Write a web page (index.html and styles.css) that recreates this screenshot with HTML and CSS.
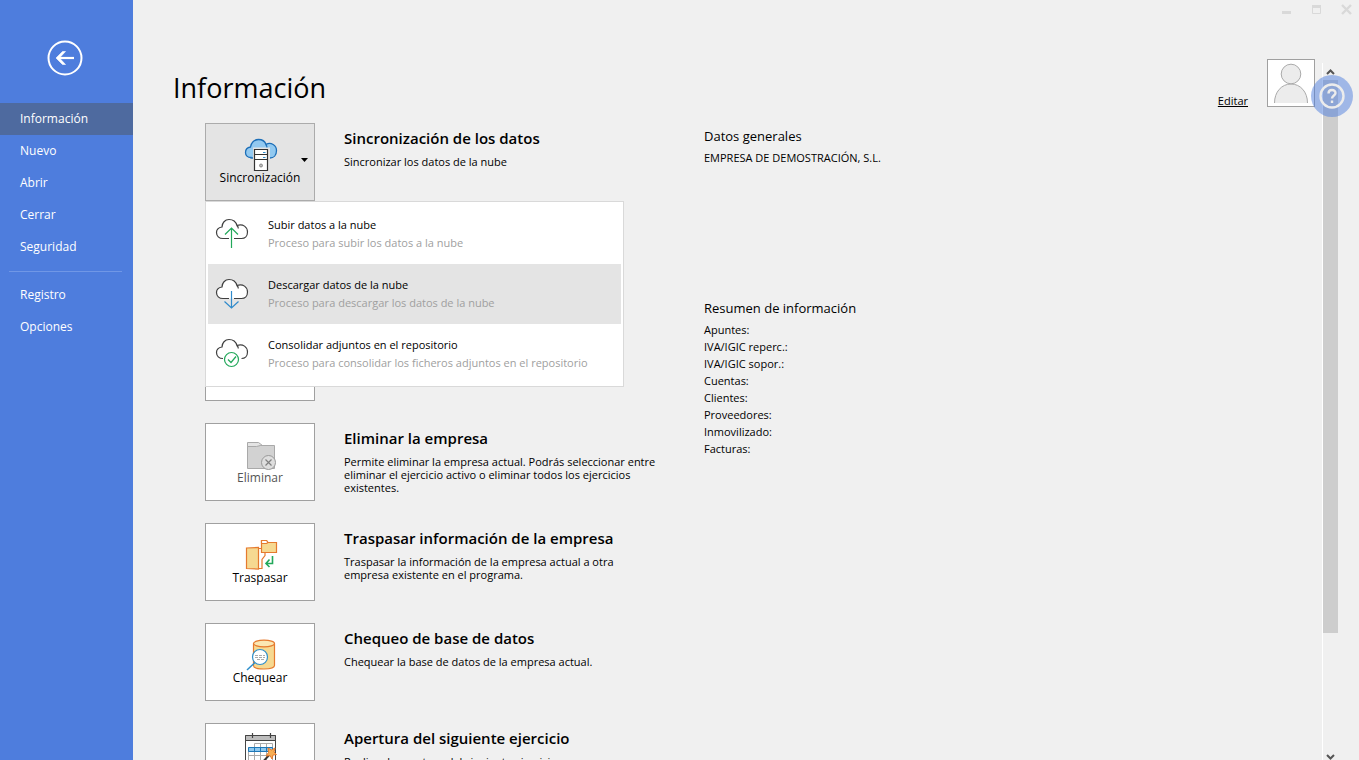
FILE: index.html
```html
<!DOCTYPE html>
<html lang="es">
<head>
<meta charset="utf-8">
<meta name="viewport" content="width=device-width, initial-scale=1">
<title>Información</title>
<link rel="stylesheet" href="styles.css">
</head>
<body>
<div class="app">
  <nav class="sidebar">
    <button class="back" type="button" aria-label="Volver">
      <svg width="36" height="36" viewBox="0 0 36 36" fill="none" stroke="#fff"><circle cx="18" cy="18" r="16.500" stroke-width="2"/><path d="M27 18H11" stroke-width="2.200"/><path d="M18.500 11.500H15.500L9 18L15.500 24.500H18.500L12.500 18Z" fill="#fff" stroke-width=".6"/></svg>
    </button>
    <a class="nav-item active" href="#">Información</a>
    <a class="nav-item" href="#">Nuevo</a>
    <a class="nav-item" href="#">Abrir</a>
    <a class="nav-item" href="#">Cerrar</a>
    <a class="nav-item" href="#">Seguridad</a>
    <hr class="nav-line">
    <a class="nav-item" href="#">Registro</a>
    <a class="nav-item" href="#">Opciones</a>
  </nav>

  <main class="main">
    <div class="window-bar">
      <button type="button" aria-label="Minimizar"><svg width="11" height="11" viewBox="0 0 11 11"><path d="M1 7h9v3H1z" fill="#d9d9d9"/></svg></button>
      <button type="button" aria-label="Maximizar"><svg width="11" height="11" viewBox="0 0 11 11"><path d="M1.500 1.500h8v8h-8z" fill="none" stroke="#d9d9d9"/><path d="M1 1h9v3H1z" fill="#d9d9d9"/></svg></button>
      <button type="button" aria-label="Cerrar ventana"><svg width="11" height="11" viewBox="0 0 11 11"><path d="M1 1l9 9M10 1l-9 9" stroke="#d9d9d9" stroke-width="2.400"/></svg></button>
    </div>

    <div class="body">
      <div class="content">
        <header class="header">
          <h1>Información</h1>
          <div class="profile">
            <a class="edit" href="#">Editar</a>
            <svg class="avatar" viewBox="0 0 46 46" fill="#ececec" stroke="#aaa"><path d="M6.500 43c0-11 7-19 16.500-19s16.500 8 16.500 19"/><circle cx="23" cy="14" r="9.800"/></svg>
          </div>
        </header>

        <div class="columns">
          <section class="actions">
            <div class="action">
              <div class="dropdown">
                <button class="tile open" type="button" aria-haspopup="menu">
                  <svg class="icon" width="34" height="34" viewBox="0 0 34 34"><path d="M7 19.500C3.500 19.500 1.500 17.500 1.500 14.500S3.500 9.500 6.500 9C7 5 10 1.500 14.500 1.500c4 0 6.500 2 7.500 5 5-3 10.500 1 10.500 6s-3 7.500-6.500 7.500H7Z" fill="#92c9f0" stroke="#1d6fb8" stroke-width="1.300"/><path d="M22 6.500c1 1.500 1.200 2.500 1 4" fill="none" stroke="#1d6fb8" stroke-width="1.300"/><path d="M9 9.500h17v24H9z" fill="#e4e4e4"/><path d="M10.500 11.500h13v21h-13zM10.500 16.500h13M10.500 21.500h13" fill="#fff" stroke="#333" stroke-width="1.200"/><path d="M19 14.500h2.500M19 19.500h2.500" stroke="#2f8fd0"/><circle cx="17" cy="27.500" r="1.500" fill="#bbb" stroke="#888"/></svg>
                  <span>Sincronización</span>
                  <svg class="caret" width="7" height="4" viewBox="0 0 7 4"><path d="M0 0h7L3.500 4z"/></svg>
                </button>
                <div class="menu" role="menu">
                  <button class="menu-item" type="button" role="menuitem">
                    <svg width="34" height="34" viewBox="0 0 34 34" fill="none" stroke="#404040" stroke-width="1.200"><path d="M14 22.500H8C4 22.500 1.500 20 1.500 16.500S4 11.500 7 11C7 7 10 3.500 14 3.500c4.500 0 7 2.500 8 6 6-2 10.500 1.500 10.500 6.500 0 4-2.500 6.500-6 6.500H19"/><path d="M22 9.500c1 1 1.300 1.500 1.300 3"/><path d="M16.500 32V12M10 18.500L16.500 12L23 18.500" stroke="#22a85a"/></svg>
                    <span class="menu-text"><span class="menu-title">Subir datos a la nube</span><span class="menu-desc">Proceso para subir los datos a la nube</span></span>
                  </button>
                  <button class="menu-item selected" type="button" role="menuitem">
                    <svg width="34" height="34" viewBox="0 0 34 34" fill="none" stroke="#404040" stroke-width="1.200"><path fill="#fff" d="M14 22.500H8C4 22.500 1.500 20 1.500 16.500S4 11.500 7 11C7 7 10 3.500 14 3.500c4.500 0 7 2.500 8 6 6-2 10.500 1.500 10.500 6.500 0 4-2.500 6.500-6 6.500H19"/><path d="M22 9.500c1 1 1.300 1.500 1.300 3"/><path d="M16.500 15V32M9.500 25.500L16.500 32L23.500 25.500" stroke="#2f8acb"/></svg>
                    <span class="menu-text"><span class="menu-title">Descargar datos de la nube</span><span class="menu-desc">Proceso para descargar los datos de la nube</span></span>
                  </button>
                  <button class="menu-item" type="button" role="menuitem">
                    <svg width="34" height="34" viewBox="0 0 34 34" fill="none" stroke="#404040" stroke-width="1.200"><path d="M8 22.500C4 22.500 1.500 20 1.500 16.500S4 11.500 7 11C7 7 10 3.500 14 3.500c4.500 0 7 2.500 8 6 6-2 10.500 1.500 10.500 6.500 0 4-2.500 6.500-6 6.500"/><path d="M22 9.500c1 1 1.300 1.500 1.300 3"/><circle cx="16.500" cy="23.500" r="7" stroke="#22a85a" fill="#fff"/><path d="M13 23.500l3 3 5-6" stroke="#22a85a"/></svg>
                    <span class="menu-text"><span class="menu-title">Consolidar adjuntos en el repositorio</span><span class="menu-desc">Proceso para consolidar los ficheros adjuntos en el repositorio</span></span>
                  </button>
                </div>
              </div>
              <div class="info"><h2>Sincronización de los datos</h2><p>Sincronizar los datos de la nube</p></div>
            </div>

            <div class="action"><div class="tile"></div></div>
            <div class="action"><div class="tile"></div></div>

            <div class="action">
              <button class="tile" type="button" disabled>
                <svg class="icon" width="34" height="34" viewBox="0 0 34 34"><path d="M3.500 30.500v-23h27v23z" fill="#d2d2d2" stroke="#a9a9a9"/><path d="M3.500 8.500v-4h11l4 3h-2l-4 1z" fill="#e4e4e4" stroke="#a9a9a9"/><circle cx="24.500" cy="24.500" r="7" fill="#dedede" stroke="#999"/><path d="M21.500 21.500l6 6M27.500 21.500l-6 6" stroke="#808080" stroke-width="1.200"/></svg>
                <span>Eliminar</span>
              </button>
              <div class="info"><h2>Eliminar la empresa</h2><p>Permite eliminar la empresa actual. Podrás seleccionar entre eliminar el ejercicio activo o eliminar todos los ejercicios existentes.</p></div>
            </div>

            <div class="action">
              <button class="tile" type="button">
                <svg class="icon" width="34" height="34" viewBox="0 0 34 34" stroke="#e57a2e" stroke-width="1.200"><path d="M15 10.500h3M15 30.500h3v-9l3-4v-3" fill="none"/><path d="M2.500 10l12-.5v21.500l-12-.5z" fill="#f6d991"/><path d="M17.500 14.500v-12h5l1.500 2h8.500v10z" fill="#f6d991"/><path d="M17.500 4.500v-2h5l1.500 2-1.500 1h-5z" fill="#fff"/><path d="M28.500 18v7.500H22M25.500 21.500l-3.500 4 3.500 3.500" fill="none" stroke="#22a85a" stroke-width="1.600"/></svg>
                <span>Traspasar</span>
              </button>
              <div class="info"><h2>Traspasar información de la empresa</h2><p>Traspasar la información de la empresa actual a otra empresa existente en el programa.</p></div>
            </div>

            <div class="action">
              <button class="tile" type="button">
                <svg class="icon" width="34" height="34" viewBox="0 0 34 34"><path d="M9.500 5.500v22c0 2 4 3.500 10.500 3.500s10.500-1.500 10.500-3.500v-22" fill="#f6d991" stroke="#e57a2e" stroke-width="1.200"/><ellipse cx="20" cy="5.500" rx="10.500" ry="3.300" fill="#fbe7b3" stroke="#e57a2e" stroke-width="1.200"/><path d="M11 24.500L3 32" stroke="#2f8fcb" stroke-width="1.500"/><circle cx="16" cy="19" r="7.500" fill="#fff" stroke="#2f8fcb" stroke-width="1.200"/><path d="M11 17.500h10M11 19.500h10M13 21.500h8" stroke="#aaa" stroke-dasharray="3 1"/></svg>
                <span>Chequear</span>
              </button>
              <div class="info"><h2>Chequeo de base de datos</h2><p>Chequear la base de datos de la empresa actual.</p></div>
            </div>

            <div class="action">
              <button class="tile tall" type="button" aria-label="Apertura">
                <svg class="icon" width="34" height="34" viewBox="0 0 34 34"><path d="M1.500 4.500h30v29h-30z" fill="#fff" stroke="#444"/><path d="M1.500 4.500h30v5h-30z" fill="#bdbdbd" stroke="#444"/><path d="M8.500 2v5M26.500 2v5" stroke="#444" stroke-width="1.200"/><path d="M4.500 16.500v13h24v-17h-18v17M16.500 12.500v17M22.500 12.500v17M4.500 24.500h24" fill="none" stroke="#aaa"/><path d="M4.500 16.500h24v4h-24zM10.500 16.500v4M16.500 16.500v4M22.500 16.500v4" fill="#8fc8ee" stroke="#1f78b8"/><path d="M27 22L17 33" stroke="#333" stroke-width="2"/><path d="M24 17l3.500 2 3.500-2-1 4 2.500 2.500-3.500.5-1 4-2-3.500-4 .5 2.500-3.500z" fill="#f6ae54" stroke="#e57a2e"/></svg>
              </button>
              <div class="info"><h2>Apertura del siguiente ejercicio</h2><p>Realizar la apertura del siguiente ejercicio.</p></div>
            </div>
          </section>

          <aside class="summary">
            <section class="general"><h3>Datos generales</h3><p>EMPRESA DE DEMOSTRACIÓN, S.L.</p></section>
            <section>
              <h3>Resumen de información</h3>
              <ul>
                <li>Apuntes:</li><li>IVA/IGIC reperc.:</li><li>IVA/IGIC sopor.:</li><li>Cuentas:</li><li>Clientes:</li><li>Proveedores:</li><li>Inmovilizado:</li><li>Facturas:</li>
              </ul>
            </section>
          </aside>
        </div>
      </div>

      <div class="scrollbar">
        <svg width="9" height="6" viewBox="0 0 9 6" fill="none" stroke="#555" stroke-width="2"><path d="M1 5l3.500-3.500L8 5"/></svg>
        <div class="track"><div class="thumb"></div></div>
        <svg width="9" height="6" viewBox="0 0 9 6" fill="none" stroke="#555" stroke-width="2"><path d="M1 1l3.500 3.500L8 1"/></svg>
      </div>
    </div>

    <button class="help" type="button" aria-label="Ayuda">
      <svg width="26" height="26" viewBox="0 0 26 26" fill="none" stroke="#ececec" stroke-width="2.400"><circle cx="13" cy="13" r="11.500"/><path d="M9.500 10.500c0-4.500 7-4.500 7-.5 0 2.500-3.500 2.500-3.500 5.500"/><path d="M13 17.500v2.500"/></svg>
    </button>
  </main>
</div>
</body>
</html>
```
FILE: styles.css
```css
* { box-sizing: border-box; }

body {
  margin: 0;
  font-family: "Open Sans", "Noto Sans", sans-serif;
  font-size: 11px;
  line-height: 13px;
  color: #000;
  background: #f0f0f0;
}

h1, h2, h3, p, ul { margin: 0; padding: 0; font-weight: 400; }
button { font: inherit; color: inherit; border: 0; padding: 0; background: none; }
svg { display: block; flex: none; }

.app { display: flex; height: 100vh; overflow: hidden; }

.sidebar { flex: none; width: 133px; background: #4e7ddd; }
.back { display: block; margin: 40px 0 27px 47px; }
.nav-item {
  display: block;
  padding-left: 20px;
  font-size: 12px;
  line-height: 32px;
  color: #fff;
  text-decoration: none;
}
.nav-item.active { background: #4e6a9f; }
.nav-line { margin: 8px 11px 7px 9px; border: 0; border-top: 1px solid #7097e6; }

.main { position: relative; flex: 1; min-width: 0; display: flex; flex-direction: column; }
.window-bar { display: flex; justify-content: flex-end; gap: 19px; height: 20px; padding: 4px 7px 0 0; }
.window-bar button { height: 11px; }

.body { flex: 1; min-height: 0; display: flex; }
.content { flex: 1; min-width: 0; padding: 39px 7px 0 40px; overflow: hidden; }
.header { display: flex; justify-content: space-between; height: 64px; }
.header h1 { padding-top: 10px; font-size: 27px; line-height: 38px; }
.profile { display: flex; align-items: flex-start; gap: 19px; }
.edit { padding-top: 35px; color: #000; }
.avatar { width: 48px; height: 48px; background: #fff; border: 1px solid #a0a0a0; }

.columns { display: flex; gap: 45px; padding-left: 32px; }
.actions { flex: 0 1 454px; display: flex; flex-direction: column; gap: 22px; }
.action { display: flex; gap: 29px; height: 78px; }
.dropdown { position: relative; }
.tile {
  position: relative;
  flex: none;
  display: flex;
  flex-direction: column;
  align-items: center;
  width: 110px;
  height: 78px;
  padding-top: 14px;
  font-size: 12px;
  line-height: 11px;
  background: #fff;
  border: 1px solid #a0a0a0;
}
.tile.open { background: #e4e4e4; border-color: #ababab; }
.tile.tall { padding-top: 7px; }
.tile:disabled { color: #555; }
.icon { margin-left: 2px; }
.caret { position: absolute; right: 6px; top: 34px; }

.info { flex: 1; padding-top: 5px; }
.info h2 { margin-bottom: 6px; font-size: 15px; font-weight: 600; line-height: 21px; }

.menu {
  position: absolute;
  z-index: 2;
  top: 100%;
  left: 0;
  width: 419px;
  padding: 2px;
  background: #fff;
  border: 1px solid #d9d9d9;
}
.menu-item { display: flex; align-items: center; gap: 19px; width: 100%; height: 60px; padding: 0 0 2px 7px; text-align: left; }
.menu-item.selected { background: #e4e4e4; }
.menu-text { display: flex; flex-direction: column; gap: 5px; }
.menu-desc { color: #a0a0a0; }

.summary { flex: 1; padding-top: 4px; }
.summary h3 { margin-bottom: 4px; font-size: 13px; line-height: 18px; }
.summary p, .summary ul { line-height: 17px; }
.general { height: 172px; }
.summary ul { list-style: none; }

.scrollbar {
  flex: none;
  display: flex;
  flex-direction: column;
  align-items: center;
  width: 16px;
  margin: 43px 21px 0 0;
  padding-top: 6px;
  border-left: 1px solid #fff;
}
.track { flex: 1; width: 100%; padding-top: 5px; }
.thumb { height: 82%; background: #cdcdcd; }

.help {
  position: absolute;
  z-index: 3;
  top: 75px;
  right: 6px;
  display: grid;
  place-items: center;
  width: 42px;
  height: 42px;
  border-radius: 50%;
  background: rgba(78, 125, 221, .5);
}
```
